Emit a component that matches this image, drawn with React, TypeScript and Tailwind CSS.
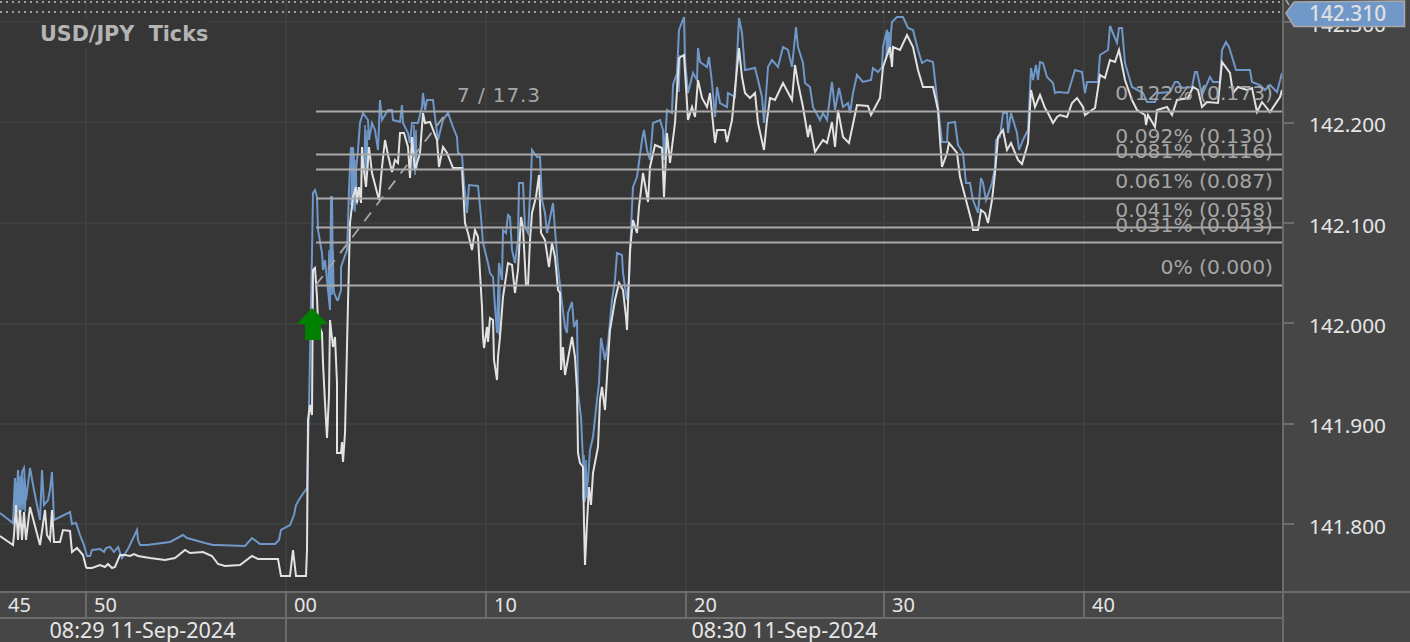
const FONT = "font-['Noto_Sans','Open_Sans',sans-serif]";
const LABEL_FONT = "DejaVu Sans, sans-serif";

const BLUE =
  "0,513 13,523 15,478 16,510 18,470 20,505 22,472 24,468 26,500 30,468 34,490 40,520 42,470 44,505 48,500 50,490 52,472 54,520 58,518 70,512 72,524 76,523 80,535 84,545 87,556 90,556 92,550 100,549 104,552 106,548 110,547 114,552 118,547 122,558 128,549 137,530 138,540 140,545 147,545 170,542 183,535 187,538 205,543 213,545 217,545 245,546 252,538 260,544 275,544 279,540 281,530 290,525 294,515 296,505 300,498 307,488 309,407 312,253 313,193 315,190 317,197 318,230 322,253 323,270 325,260 328,290 330,310 331,197 332,197 333,290 337,300 338,300 341,290 341,267 347,250 348,223 349,190 351,147 352,167 353,147 355,180 358,150 360,123 363,113 368,120 369,140 372,123 375,130 378,150 380,100 382,120 388,110 392,110 393,120 400,122 402,105 403,123 408,133 410,143 412,123 418,123 422,107 423,93 425,110 427,100 433,100 435,117 438,140 443,120 448,113 453,127 457,137 458,153 462,155 464,183 467,213 469,185 478,186 481,217 483,243 488,263 490,273 493,277 495,307 497,333 499,263 502,280 503,230 506,233 508,215 510,217 512,250 515,263 518,240 519,183 523,183 525,227 528,233 531,177 532,150 537,157 540,157 542,200 545,213 547,233 553,203 555,230 558,267 562,303 565,327 567,333 568,313 572,302 574,327 577,320 578,393 581,417 583,460 585,500 588,480 590,450 593,437 597,400 599,383 601,338 605,360 608,343 612,300 615,280 617,253 622,255 623,273 627,300 629,280 632,207 633,187 637,177 642,140 644,130 647,150 650,160 653,123 660,120 663,130 664,160 667,110 672,113 673,85 677,73 679,30 684,17 685,60 688,93 693,73 697,80 698,48 700,62 707,67 709,57 712,83 715,117 717,87 720,103 727,107 728,93 735,97 739,18 742,33 745,70 755,68 758,80 762,97 764,123 768,67 772,60 778,67 783,47 788,50 792,67 796,27 798,47 803,63 805,83 810,87 813,107 820,120 823,113 827,120 832,82 835,110 839,88 843,107 848,103 850,113 853,93 857,75 863,82 871,80 873,68 878,72 882,67 883,47 887,30 890,43 892,22 897,17 903,17 908,28 913,30 918,50 922,63 927,60 933,62 938,107 942,142 947,142 948,123 955,122 958,145 963,153 966,183 970,183 973,200 978,213 981,178 983,183 986,200 992,183 995,167 996,140 1000,137 1003,113 1007,113 1008,133 1011,113 1017,133 1019,150 1023,140 1028,130 1031,68 1033,80 1036,65 1038,80 1040,62 1043,63 1047,77 1053,83 1055,93 1058,92 1068,93 1075,70 1082,72 1085,93 1087,82 1098,82 1100,55 1108,50 1110,26 1117,43 1119,28 1122,28 1125,63 1132,87 1143,93 1147,102 1155,102 1158,93 1170,92 1175,82 1178,82 1182,88 1192,87 1195,72 1197,72 1202,95 1210,77 1213,82 1220,82 1222,50 1226,42 1229,47 1233,60 1236,70 1250,70 1252,82 1260,85 1265,90 1270,85 1277,92 1282,73";

const WHITE =
  "0,536 13,545 14,535 16,505 18,540 20,510 22,540 24,512 26,540 30,507 40,545 45,510 47,535 50,540 52,510 54,542 60,542 63,530 70,531 72,552 77,548 83,555 86,567 87,568 92,568 100,565 105,567 108,564 112,568 115,567 120,555 125,555 130,556 134,554 138,556 150,558 165,560 175,558 185,550 190,553 203,552 212,556 218,564 225,566 240,565 252,556 258,559 278,559 281,576 290,576 293,550 296,576 306,576 307,550 308,420 310,405 312,415 313,270 315,268 317,297 318,323 322,333 323,363 325,403 327,438 329,395 330,320 333,347 335,337 337,383 337,453 341,453 342,442 343,462 345,433 347,347 348,303 350,223 353,197 356,187 357,203 359,187 361,203 362,147 363,163 366,187 369,147 372,173 379,200 382,167 385,140 388,155 392,172 395,160 398,163 400,133 404,133 408,147 410,178 412,137 415,170 420,153 423,113 425,123 430,122 437,140 439,167 443,147 447,153 453,168 462,168 463,187 465,223 468,233 472,250 475,230 478,237 480,273 482,307 483,337 484,348 487,327 488,342 490,318 493,320 494,360 497,380 498,357 500,337 503,297 508,263 512,265 515,293 518,270 521,217 523,227 526,285 528,285 530,240 532,213 536,197 539,175 541,233 545,240 549,267 552,243 555,257 558,290 560,293 561,370 563,347 565,375 572,337 575,357 577,390 578,453 580,463 583,467 584,523 585,565 587,523 589,487 591,505 593,473 598,447 600,400 602,387 605,410 608,360 610,330 615,300 619,283 623,290 626,317 627,330 630,250 633,220 637,233 639,207 643,173 648,202 650,167 655,145 662,148 664,197 667,133 670,163 675,123 679,58 684,55 687,103 688,120 692,107 695,117 698,80 702,98 707,107 710,93 713,123 715,143 717,130 725,130 727,142 732,120 739,48 742,77 745,93 750,98 755,93 758,123 764,150 767,120 770,98 775,100 783,83 792,100 795,65 798,83 803,107 808,137 810,125 815,152 823,140 827,143 832,122 835,147 838,110 843,137 849,143 857,105 868,106 871,115 880,98 883,67 890,47 892,67 893,47 900,50 907,35 913,47 918,70 923,87 933,87 938,110 940,140 942,167 947,153 949,143 957,153 960,177 966,200 972,223 973,230 978,230 981,210 985,213 988,223 992,200 995,173 998,137 1003,130 1007,150 1011,143 1018,160 1022,164 1026,150 1028,143 1031,90 1035,107 1040,95 1045,108 1048,113 1053,123 1057,117 1060,115 1067,117 1072,103 1077,98 1083,107 1085,115 1092,110 1095,108 1100,75 1105,78 1110,60 1115,62 1119,50 1125,80 1132,100 1137,110 1145,115 1146,125 1148,115 1155,127 1157,110 1167,107 1172,115 1177,100 1188,98 1193,87 1198,90 1202,107 1207,102 1218,103 1222,62 1230,73 1233,93 1238,87 1247,90 1252,88 1257,112 1262,102 1270,112 1280,97 1282,90";

// spots where the ticks pile up into a solid band
const BLUE_DENSE = [
  "15,510 16,482 17,512 18,478 19,514 20,476 21,512 22,474 23,510 24,478 25,512 26,490",
  "328,290 329,250 330,296 331,245 332,295 333,250 334,292",
  "351,205 352,150 353,210 354,155 355,212 356,160 357,205",
  "364,170 365,125 366,175 367,130 368,170",
  "413,170 414,125 415,175 416,130 417,170",
  "497,333 498,290 499,335 500,285",
  "583,500 584,455 585,502 586,460 587,498",
  "677,85 678,60 679,92 680,55",
  "886,60 887,30 888,55 889,32 890,58 891,35",
];

const FIB = [
  { y: 111.5, label: "0.122% (0.173)", textY: 100 },
  { y: 154.5, label: "0.092% (0.130)", textY: 143 },
  { y: 169.5, label: "0.081% (0.116)", textY: 158 },
  { y: 198.5, label: "0.061% (0.087)", textY: 188 },
  { y: 227.5, label: "0.041% (0.058)", textY: 217 },
  { y: 242.5, label: "0.031% (0.043)", textY: 232 },
  { y: 285.5, label: "0% (0.000)", textY: 274 },
];

const GRID_X = [86, 286, 486, 686, 884, 1084];
const GRID_Y = [22, 122, 223, 324, 424, 524];
const PRICES = ["142.300", "142.200", "142.100", "142.000", "141.900", "141.800"];

const MINUTES = [
  { label: "45", width: "w-[85px]" },
  { label: "50", width: "w-[200px]" },
  { label: "00", width: "w-[200px]" },
  { label: "10", width: "w-[200px]" },
  { label: "20", width: "w-[198px]" },
  { label: "30", width: "w-[200px]" },
  { label: "40", width: "w-[199px]" },
];

function Chart() {
  return (
    <svg width="1282" height="591" className="block">
      {GRID_X.map((x) => (
        <line key={x} x1={x} x2={x} y1="0" y2="591" stroke="#3e3e3e" strokeWidth="2" />
      ))}
      {GRID_Y.map((y) => (
        <line key={y} x1="0" x2="1282" y1={y} y2={y} stroke="#3e3e3e" strokeWidth="2" />
      ))}
      <line x1="0" x2="1282" y1="2" y2="2" stroke="#a0a0a0" strokeWidth="2" strokeDasharray="2 4" />
      <line x1="0" x2="1282" y1="12" y2="12" stroke="#a0a0a0" strokeWidth="2" strokeDasharray="2 4" />

      <polyline points={BLUE} fill="none" stroke="#6f97c8" strokeWidth="2" />
      {BLUE_DENSE.map((points) => (
        <polyline key={points} points={points} fill="none" stroke="#6f97c8" strokeWidth="1.5" />
      ))}
      <polyline points={WHITE} fill="none" stroke="#e2e2e2" strokeWidth="2" />

      {/* fibonacci levels */}
      <line x1="316" y1="285" x2="448" y2="111" stroke="#a8a8a8" strokeWidth="1.8" strokeDasharray="11 9" />
      {FIB.map((f) => (
        <line key={f.y} x1="316" x2="1282" y1={f.y} y2={f.y} stroke="#a9a9a9" strokeWidth="2" />
      ))}
      {FIB.map((f) => (
        <text
          key={f.label}
          x="1273"
          y={f.textY}
          textAnchor="end"
          fontFamily={LABEL_FONT}
          fontSize="20.3"
          fill="#a6a6a6"
        >
          {f.label}
        </text>
      ))}
      <text x="457" y="102" fontFamily={LABEL_FONT} fontSize="20" letterSpacing="0.9" fill="#a6a6a6">
        7 / 17.3
      </text>

      <polygon points="312,308 328,324 321,324 321,340 305,340 305,324 297,324" fill="#008000" />
    </svg>
  );
}

export default function App() {
  return (
    <div className={`flex h-[642px] w-[1410px] flex-col overflow-hidden bg-[#464646] ${FONT}`}>
      <div className="flex h-[591px]">
        <div className="relative w-[1282px] bg-[#363636]">
          <Chart />
          <div className="absolute left-[40px] top-[20px] whitespace-pre bg-[#363636] font-['DejaVu_Sans',sans-serif] text-[20.7px] leading-[28px] font-bold text-[#b4b4b4]">
            USD/JPY  Ticks
          </div>
        </div>

        {/* price axis */}
        <div className="relative flex-1 overflow-hidden border-l-2 border-[#6c6c6c]">
          <div className="-mt-[28px] flex flex-col">
            {PRICES.map((price) => (
              <div key={price} className="flex h-[100.4px] items-center">
                <div className="h-0.5 w-[10px] bg-[#6c6c6c]" />
                <span className="ml-[15px] pt-[4px] text-[20.8px] leading-none text-[#e6e6e6]">{price}</span>
              </div>
            ))}
          </div>
          <div className="absolute left-0 top-0">
            <svg width="126" height="28" className="block">
              <polyline points="2,0 5,5" fill="none" stroke="#a9a9a9" strokeWidth="1.5" />
              <polygon
                points="2,13 10,2 120.5,1 120.5,26.5 10,26.5"
                fill="#6f97c8"
                stroke="#a9a9a9"
                strokeWidth="1.5"
              />
              <text x="25" y="21" fontSize="20.8" fontWeight="500" fill="#e0e0e0">
                142.310
              </text>
            </svg>
          </div>
        </div>
      </div>

      {/* time axis */}
      <div className="h-0.5 bg-[#6c6c6c]" />
      <div className="flex h-[24px] text-[20px] leading-[24px] text-[#e6e6e6]">
        <div className="flex w-[1282px]">
          {MINUTES.map((m, i) => (
            <div
              key={m.label}
              className={`${m.width} ${i === 0 ? "pl-2" : "border-l-2 border-[#6c6c6c] pl-[7px]"}`}
            >
              {m.label}
            </div>
          ))}
        </div>
        <div className="w-0.5 bg-[#6c6c6c]" />
      </div>
      <div className="flex h-[25px] text-[21.6px] leading-[22px] text-[#e6e6e6]">
        <div className="flex w-[1282px] border-t-2 border-[#6c6c6c]">
          <div className="w-[285px] text-center">08:29 11-Sep-2024</div>
          <div className="flex-1 border-l-2 border-[#6c6c6c] text-center">08:30 11-Sep-2024</div>
        </div>
        <div className="w-0.5 bg-[#6c6c6c]" />
      </div>
    </div>
  );
}
